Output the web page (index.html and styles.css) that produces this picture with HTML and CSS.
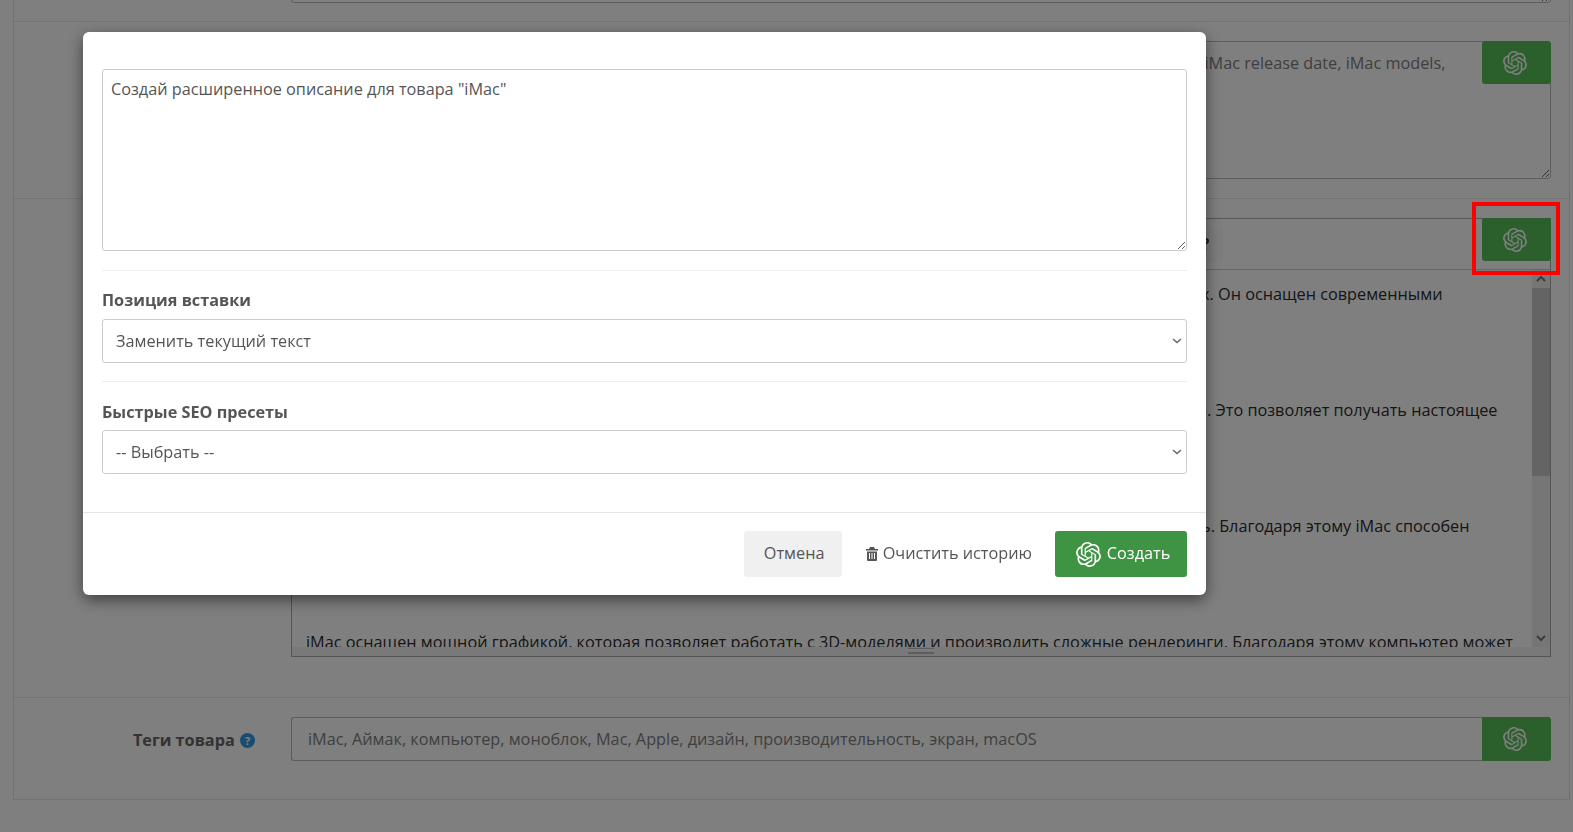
FILE: index.html
```html
<!DOCTYPE html>
<html lang="ru">
<head>
<meta charset="utf-8">
<title>Товар</title>
<link rel="stylesheet" href="styles.css">
</head>
<body>
<svg class="defs" aria-hidden="true"><symbol id="gpt" viewBox="0 0 24 24"><path d="M22.2819 9.8211a5.9847 5.9847 0 0 0-.5157-4.9108 6.0462 6.0462 0 0 0-6.5098-2.9A6.0651 6.0651 0 0 0 4.9807 4.1818a5.9847 5.9847 0 0 0-3.9977 2.9 6.0462 6.0462 0 0 0 .7427 7.0966 5.98 5.98 0 0 0 .511 4.9107 6.051 6.051 0 0 0 6.5146 2.9001A5.9847 5.9847 0 0 0 13.2599 24a6.0557 6.0557 0 0 0 5.7718-4.2058 5.9894 5.9894 0 0 0 3.9977-2.9001 6.0557 6.0557 0 0 0-.7475-7.0729zm-9.022 12.6081a4.4755 4.4755 0 0 1-2.8764-1.0408l.1419-.0804 4.7783-2.7582a.7948.7948 0 0 0 .3927-.6813v-6.7369l2.02 1.1686a.071.071 0 0 1 .038.052v5.5826a4.504 4.504 0 0 1-4.4945 4.4944zm-9.6607-4.1254a4.4708 4.4708 0 0 1-.5346-3.0137l.142.0852 4.783 2.7582a.7712.7712 0 0 0 .7806 0l5.8428-3.3685v2.3324a.0804.0804 0 0 1-.0332.0615L9.74 19.9502a4.4992 4.4992 0 0 1-6.1408-1.6464zM2.3408 7.8956a4.485 4.485 0 0 1 2.3655-1.9728V11.6a.7664.7664 0 0 0 .3879.6765l5.8144 3.3543-2.0201 1.1685a.0757.0757 0 0 1-.071 0l-4.8303-2.7865A4.504 4.504 0 0 1 2.3408 7.872zm16.5963 3.8558L13.1038 8.364 15.1192 7.2a.0757.0757 0 0 1 .071 0l4.8303 2.7913a4.4944 4.4944 0 0 1-.6765 8.1042v-5.6772a.79.79 0 0 0-.407-.667zm2.0107-3.0231l-.142-.0852-4.7735-2.7818a.7759.7759 0 0 0-.7854 0L9.409 9.2297V6.8974a.0662.0662 0 0 1 .0284-.0615l4.8303-2.7866a4.4992 4.4992 0 0 1 6.6802 4.66zM8.3065 12.863l-2.02-1.1638a.0804.0804 0 0 1-.038-.0567V6.0742a4.4992 4.4992 0 0 1 7.3757-3.4537l-.142.0805L8.704 5.459a.7948.7948 0 0 0-.3927.6813zm1.0976-2.3654l2.602-1.4998 2.6069 1.4998v2.9994l-2.5974 1.4997-2.6067-1.4997Z"/></symbol></svg>

<main class="page">
  <section class="panel">
    <div class="row row-first">
      <div class="label"></div>
      <div class="field"><textarea class="area area-top" aria-label="Описание"></textarea></div>
    </div>
    <div class="row">
      <div class="label"></div>
      <div class="field">
        <textarea class="area area-keys" aria-label="Ключевые слова">iMac, Apple iMac, Аймак, моноблоки, компьютер Apple, купить iMac, iMac цена, характеристики iMac, обзор iMac, iMac release date, iMac models, iMac price</textarea>
        <button class="ai-btn ai-btn-over" type="button" aria-label="AI"><svg class="gpt"><use href="#gpt"/></svg></button>
      </div>
    </div>
    <div class="row row-editor">
      <div class="label"></div>
      <div class="field">
        <div class="editor">
          <div class="toolbar"><span class="tool">?</span></div>
          <div class="editor-main">
            <div class="editor-text">
              <p>iMac — это стильный, мощный моноблочный компьютер Apple для работы, учёбы и творчества в любых задачах. Он оснащен современными<br>процессорами и быстрой памятью.</p>
              <p>Большой дисплей iMac, с высоким разрешением, передаёт изображение с максимальной точностью и яркостью. Это позволяет получать настоящее<br>удовольствие от работы с фото и видео.</p>
              <p>Внутри компьютера установлен производительный процессор, который обеспечивает весьма высокую скорость. Благодаря этому iMac способен<br>справляться с самыми сложными задачами.</p>
              <p>iMac оснащен мощной графикой, которая позволяет работать с 3D-моделями и производить сложные рендеринги. Благодаря этому компьютер может<br>использоваться профессионалами.</p>
            </div>
            <div class="scrollbar">
              <svg class="chev" viewBox="0 0 10 6"><path d="M1 5l4-4 4 4"/></svg>
              <div class="thumb"></div>
              <div class="track-fill"></div>
              <svg class="chev" viewBox="0 0 10 6"><path d="M1 1l4 4 4-4"/></svg>
            </div>
          </div>
          <div class="statusbar"><span class="grip"></span></div>
        </div>
        <button class="ai-btn ai-btn-over" type="button" aria-label="AI"><svg class="gpt"><use href="#gpt"/></svg></button>
      </div>
    </div>
    <div class="row row-last">
      <div class="label">Теги товара <span class="help">?</span></div>
      <div class="field field-inline">
        <input class="tags" type="text" value="iMac, Аймак, компьютер, моноблок, Mac, Apple, дизайн, производительность, экран, macOS" aria-label="Теги товара">
        <button class="ai-btn" type="button" aria-label="AI"><svg class="gpt"><use href="#gpt"/></svg></button>
      </div>
    </div>
  </section>
</main>

<div class="overlay">
  <div class="highlight"></div>
  <div class="modal">
    <div class="modal-body">
      <textarea class="prompt" aria-label="Запрос">Создай расширенное описание для товара "iMac"</textarea>
      <hr class="sep">
      <label class="m-label" for="pos">Позиция вставки</label>
      <select class="m-select" id="pos"><option>Заменить текущий текст</option></select>
      <hr class="sep">
      <label class="m-label m-label-low" for="seo">Быстрые SEO пресеты</label>
      <select class="m-select" id="seo"><option>-- Выбрать --</option></select>
    </div>
    <div class="modal-footer">
      <button class="btn btn-cancel" type="button">Отмена</button>
      <button class="btn btn-clear" type="button"><svg class="trash" viewBox="0 0 12 14"><path d="M4 0h4l1 2h3v1.500H0V2h3zM1 4.500h10V13a1 1 0 0 1-1 1H2a1 1 0 0 1-1-1zM3 6v6h1V6zm2.500 0v6h1V6zM8 6v6h1V6z" fill-rule="evenodd"/></svg>Очистить историю</button>
      <button class="btn btn-create" type="button"><svg class="gpt gpt-create"><use href="#gpt"/></svg>Создать</button>
    </div>
  </div>
</div>
</body>
</html>
```

FILE: styles.css
```css
* { box-sizing: border-box; }
html, body { margin: 0; height: 100%; overflow: hidden; }
body {
  background: #fff;
  font-family: "Open Sans", "Noto Sans", sans-serif;
  font-size: 16.25px;
  color: #555;
}
.defs { display: none; }
.page { padding: 0 3px 0 13px; margin-top: -60px; }
.panel { border: 1px solid #e6e6e6; background: #fff; }
.row {
  display: grid;
  grid-template-columns: 277px 1260px;
  padding: 19px 0;
  border-bottom: 1px solid #e8e8e8;
}
.row-first { padding: 0 0 18px; }
.row-editor { padding-bottom: 40px; }
.row-last { border-bottom: 0; padding-bottom: 38px; }
.label {
  text-align: right;
  padding: 12px 36px 0 0;
  font-weight: 700;
  color: #666;
}
.help {
  display: inline-flex;
  align-items: center;
  justify-content: center;
  width: 15px;
  height: 15px;
  border-radius: 50%;
  background: #3098e0;
  color: #fff;
  font-size: 11px;
  vertical-align: 1px;
  margin-left: 1px;
}
.field { position: relative; }
.field-inline { display: flex; }
.area {
  display: block;
  width: 100%;
  border: 1px solid #bbb;
  border-radius: 3px;
  background: #fff;
  font: inherit;
  color: #808080;
  padding: 10px 90px 8px 16px;
  line-height: 22px;
  resize: vertical;
  outline: 0;
}
.area-top { height: 62px; }
.area-keys { height: 138px; }
.ai-btn {
  display: flex;
  align-items: center;
  justify-content: center;
  width: 69px;
  height: 43px;
  flex: none;
  border: 0;
  border-radius: 3px;
  background: #56c058;
  padding: 0 4px 0 0;
}
.ai-btn-over { position: absolute; top: 0; right: 0; }
.field-inline .ai-btn { height: 44px; border-radius: 0 3px 3px 0; }
.gpt { width: 24px; height: 24px; fill: #fff; }
.editor {
  border: 1px solid #aaa;
  display: flex;
  flex-direction: column;
  height: 439px;
}
.toolbar {
  height: 51px;
  flex: none;
  border-bottom: 1px solid #ccc;
  display: flex;
  align-items: center;
  padding-left: 900px;
}
.tool {
  display: flex;
  align-items: center;
  justify-content: center;
  width: 31px;
  height: 35px;
  padding-right: 4px;
  background: #fafafa;
  border-radius: 3px;
  font-weight: 700;
  color: #333;
}
.editor-main { flex: 1; display: flex; min-height: 0; }
.editor-text {
  flex: 1;
  min-width: 0;
  overflow: hidden;
  padding: 13px 0 0 14px;
  color: #2c2c2c;
  line-height: 23px;
  white-space: nowrap;
}
.editor-text p { margin: 0; height: 116px; }
.scrollbar {
  width: 18px;
  flex: none;
  display: flex;
  flex-direction: column;
  align-items: center;
  background: #ececec;
}
.chev {
  flex: none;
  width: 10px;
  height: 18px;
  fill: none;
  stroke: #777;
  stroke-width: 2;
}
.thumb { width: 100%; height: 188px; background: #c8c8c8; flex: none; }
.track-fill { flex: 1; }
.statusbar {
  height: 9px;
  flex: none;
  display: flex;
  align-items: flex-start;
  justify-content: center;
  background: #f2f2f2;
}
.grip {
  width: 26px;
  height: 6px;
  margin-top: 1px;
  border-top: 1px solid #bbb;
  border-bottom: 1px solid #bbb;
  box-shadow: inset 0 1px 0 #fff, inset 0 -1px 0 #bbb;
}
.tags {
  flex: 1;
  min-width: 0;
  height: 44px;
  border: 1px solid #bbb;
  border-right: 0;
  border-radius: 3px 0 0 3px;
  font: inherit;
  color: #808080;
  padding: 0 16px;
  background: #fff;
  outline: 0;
}

.overlay {
  position: fixed;
  inset: 0;
  background: rgba(0, 0, 0, .5);
  padding: 32px 0 0 83px;
}
.highlight {
  position: absolute;
  left: 1472px;
  top: 202px;
  width: 88px;
  height: 73px;
  border: 4px solid #f00;
}
.modal {
  width: 1123px;
  background: #fff;
  border-radius: 6px;
  box-shadow: 0 5px 15px rgba(0, 0, 0, .5);
}
.modal-body { padding: 37px 19px 38px; }
.prompt {
  display: block;
  width: 100%;
  height: 182px;
  border: 1px solid #ccc;
  border-radius: 3px;
  font: inherit;
  color: #555;
  padding: 8px;
  line-height: 22px;
  outline: 0;
  resize: vertical;
}
.sep { border: 0; border-top: 1px solid #eee; margin: 19px 0; }
.m-select + .sep { margin-top: 18px; }
.m-label {
  display: block;
  font-weight: 700;
  line-height: 21px;
  margin: 0 0 8px;
}
.m-label-low { padding-top: 1px; margin-bottom: 7px; }
.m-select {
  display: block;
  width: 100%;
  height: 44px;
  border: 1px solid #ccc;
  border-radius: 3px;
  appearance: none;
  background: #fff url("data:image/svg+xml,%3Csvg xmlns='http://www.w3.org/2000/svg' width='10' height='6' viewBox='0 0 10 6'%3E%3Cpath d='M1 1l4 3.500L9 1' fill='none' stroke='%23666' stroke-width='1.500'/%3E%3C/svg%3E") no-repeat right 4px center;
  font: inherit;
  color: #555;
  padding: 0 13px;
  outline: 0;
}
.modal-footer {
  display: flex;
  justify-content: flex-end;
  align-items: center;
  gap: 24px;
  padding: 18px 19px 18px;
  border-top: 1px solid #e5e5e5;
}
.btn {
  display: flex;
  align-items: center;
  justify-content: center;
  height: 46px;
  border: 0;
  border-radius: 3px;
  font: inherit;
  padding: 0 0 2px;
}
.btn-cancel { width: 98px; padding-left: 3px; background: #f0f0f0; color: #555; }
.btn-clear { background: none; color: #555; margin-right: -1px; }
.trash { width: 12px; height: 14px; fill: #555; margin: 2px 5px 0 0; }
.btn-create { width: 132px; padding-left: 4px; background: #3e9443; color: #fff; }
.gpt-create { margin: 2px 6px 0 0; width: 25px; height: 25px; }
```
